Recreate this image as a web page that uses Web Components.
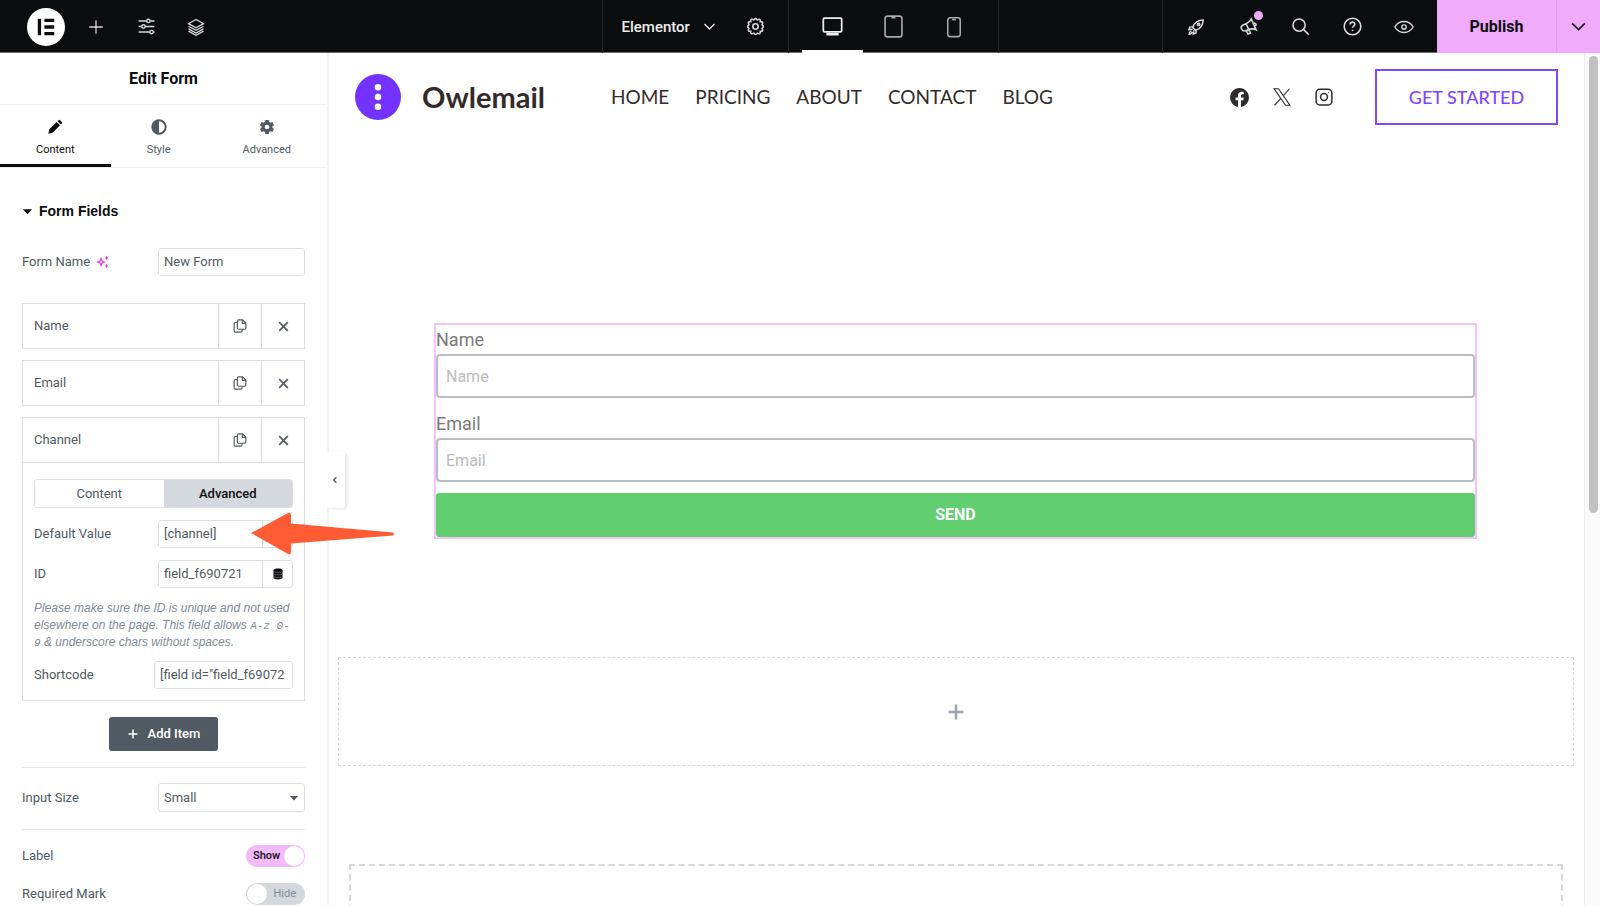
<!DOCTYPE html>
<html lang="en">
<head>
<meta charset="utf-8">
<title>Elementor | Edit Form</title>
<style>
  * { box-sizing: border-box; }
  body {
    margin: 0;
    height: 100vh;
    overflow: hidden;
    display: flex;
    flex-direction: column;
    background: #fff;
    color: #515962;
    font: 13px/18px Roboto, "Liberation Sans", sans-serif;
  }
  main {
    flex: 1;
    min-height: 0;
    display: flex;
  }
</style>
</head>
<body>
<editor-topbar></editor-topbar>
<main>
  <editor-panel>
    <panel-section heading="Form Fields">
      <text-control label="Form Name" value="New Form" ai></text-control>
      <field-list>
        <field-item label="Name"></field-item>
        <field-item label="Email"></field-item>
        <field-item label="Channel">
          <field-settings></field-settings>
        </field-item>
      </field-list>
      <select-control label="Input Size" value="Small"></select-control>
      <switch-control label="Label" checked></switch-control>
      <switch-control label="Required Mark"></switch-control>
    </panel-section>
  </editor-panel>
  <site-preview>
    <site-header></site-header>
    <form-widget></form-widget>
    <drop-zone class="add"></drop-zone>
    <drop-zone class="section"></drop-zone>
  </site-preview>
</main>

<script>
const icons = {
  logo: '<circle cx="12" cy="12" r="12" fill="#fff"/><path d="M6.8 6.8h2.1v10.4H6.8zM11 6.8h6.2v2.1H11zM11 10.95h6.2v2.1H11zM11 15.1h6.2v2.1H11z" fill="#0c0d0e"/>',
  plus: '<path d="M12 3v18M3 12h18"/>',
  sliders: '<path d="M2 5h10M16.5 5H22M2 12h4M10.5 12H22M2 19h14M20.5 19H22"/><circle cx="14.3" cy="5" r="2.2"/><circle cx="8.2" cy="12" r="2.2"/><circle cx="18.3" cy="19" r="2.2"/>',
  layers: '<path d="M12 2L2 7.5 12 13l10-5.5zM2 11l10 5.5L22 11M2 14.5L12 20l10-5.5M2 17.5L12 23l10-5.5"/>',
  chevron: '<path d="M4 8l8 8 8-8"/>',
  left: '<path d="M16 4l-8 8 8 8"/>',
  gear: '<path d="M9.8 3.6Q12 .4 14.2 3.6 18.6 1.4 18 5.9 22.5 5.5 20.3 9.7 23.5 12 20.3 14.3 22.5 18.5 18 18.1 18.6 22.6 14.2 20.4 12 23.6 9.8 20.4 5.4 22.6 6 18.1 1.5 18.5 3.7 14.3.5 12 3.7 9.7 1.5 5.5 6 5.9 5.4 1.4 9.8 3.6z"/><circle cx="12" cy="12" r="3.4"/>',
  desktop: '<rect x="1.5" y="2.5" width="21" height="15.5" rx="1.5"/><path d="M5 20.8h14" stroke-width="3"/>',
  tablet: '<rect x="3.2" y="1.2" width="17.6" height="21.6" rx="2.5"/><path d="M10 2.8h4"/>',
  phone: '<rect x="5.2" y="2" width="13.6" height="20.5" rx="2.5"/><path d="M10 4h4"/>',
  rocket: '<path d="M7.5 12.5C10 6 14 2.5 21.5 2.5c0 7.5-3.5 11.5-10 14zM8 11.5L4 12l-1.500 3.5 5-.5M12.5 16l-.5 4-3.500 1.500.5-5M6 17.5c-2 .5-3 2-3 4 2 0 3.500-1 4-3"/><circle cx="15.5" cy="8.5" r="1.6"/>',
  megaphone: '<path d="M15.5 2.5l6 13.500c-3.500-1.500-6-1.500-9.500 0L7.500 17.500c-4 1-6.500-5-3-7L9 8.500c3.500-1.500 5-2.800 6.500-6zM9 8.500l3.200 7.300M9 17l2.500 4.500 3-1.200-2.300-4.500M19 7.500c2.500.2 3.200 2 1.800 4"/>',
  search: '<circle cx="10.2" cy="10.2" r="7.7"/><path d="M16 16l6.500 6.500"/>',
  help: '<circle cx="12" cy="12" r="10.500"/><path d="M9 9.500c0-4 6-4 6-.3 0 2.300-3 2.300-3 4.500M12 16v1.800"/>',
  eye: '<path d="M1 12C6 3.300 18 3.300 23 12 18 20.700 6 20.700 1 12z"/><circle cx="12" cy="12" r="2.600"/>',
  pencil: '<path d="M2 22l1.500-6.500L14.500 4.500l5 5L8.500 20.500zM15.800 3.200l1.400-1.400q1.200-1 2.400 0l2.600 2.600q1 1.200 0 2.400l-1.400 1.400z" class="solid"/>',
  contrast: '<circle cx="12" cy="12" r="10" stroke-width="3"/><path d="M12 2v20a10 10 0 010-20z" class="solid"/>',
  cog: '<path d="M9.500 1.500h5l.6 3 2 1.100 2.900-1 2.500 4.300-2.300 2v2.200l2.300 2-2.500 4.300-2.900-1-2 1.100-.6 3h-5l-.6-3-2-1.100-2.900 1-2.500-4.300 2.300-2v-2.200l-2.300-2L4 4.600l2.900 1 2-1.100zM12 8.500a3.500 3.500 0 100 7 3.500 3.500 0 000-7z" class="solid"/>',
  caret: '<path d="M2 7h20L12 18z" class="solid"/>',
  sparkle: '<path d="M8 5l2 5 5 2-5 2-2 5-2-5-5-2 5-2z"/><path d="M19 0l1.500 2.500L23 4l-2.500 1.500L19 8l-1.500-2.500L15 4l2.500-1.500zM19 16l1.500 2.500L23 20l-2.500 1.500L19 24l-1.500-2.500L15 20l2.500-1.500z" class="solid"/>',
  copy: '<path d="M9.500 1.500h7L22 7v8.500q0 2-2 2H9.500q-2 0-2-2v-12q0-2 2-2zM16 2v5.500h5.500M7.500 6H4Q2 6 2 8v12.500q0 2 2 2h9.500q2 0 2-2v-3"/>',
  close: '<path d="M4 4l16 16M20 4L4 20"/>',
  database: '<path d="M3 4.500C3 0 21 0 21 4.500V19.500C21 24 3 24 3 19.500z" class="solid"/><path d="M3 7c3 2.500 15 2.500 18 0M3 12c3 2.500 15 2.500 18 0M3 17c3 2.500 15 2.500 18 0" stroke="#9da5ae" stroke-width="1"/>',
  dots: '<circle cx="12" cy="12" r="12" fill="#7332ff"/><g fill="#fff"><circle cx="12" cy="6.900" r="1.700"/><circle cx="12" cy="12" r="1.700"/><circle cx="12" cy="17.100" r="1.700"/></g>',
  facebook: '<path d="M24 12a12 12 0 10-13.900 11.900v-8.400H7.100V12h3V9.400c0-3 1.800-4.700 4.600-4.700 1.300 0 2.700.2 2.700.2v3h-1.500c-1.500 0-2 .9-2 1.900V12h3.400l-.5 3.500h-2.900v8.400A12 12 0 0024 12z" class="solid"/>',
  x: '<path d="M1.500 1h5.800l15.200 22h-5.800zM22 1L13.300 10.800M10.800 13.500L2 23"/>',
  instagram: '<rect x="1.500" y="1.500" width="21" height="21" rx="5"/><circle cx="12" cy="12" r="4.600"/><circle cx="18" cy="6" r=".8" class="solid"/>'
};

class Base extends HTMLElement {
  constructor() {
    super();
    this.attachShadow({mode: "open"});
  }
  connectedCallback() {
    this.shadowRoot.innerHTML = `
      <style>
        * { box-sizing: border-box; }
        :host { display: block; }
        button, input, select { font: inherit; color: inherit; margin: 0; }
        button { background: none; border: 0; padding: 0; cursor: pointer; }
        a { color: inherit; text-decoration: none; }
      </style>
      ${this.template()}
    `;
  }
  attr(name) {
    return this.getAttribute(name) || "";
  }
}

class UiIcon extends Base {
  template() {
    return `
      <style>
        :host { display: inline-flex; flex: none; }
        svg { display: block; fill: none; stroke: currentColor; overflow: visible; }
        .solid { fill: currentColor; stroke: none; }
      </style>
      <svg width="${this.attr("size")}" height="${this.attr("size")}" viewBox="0 0 24 24"
        stroke-width="${this.attr("weight") || 1.7}" aria-hidden="true">${icons[this.attr("name")]}</svg>
    `;
  }
}

class EditorTopbar extends Base {
  template() {
    return `
      <style>
        :host {
          display: grid;
          grid-template-columns: 1fr auto 1fr;
          height: 53px;
          flex: none;
          background: #0c0d0e;
          border-bottom: 1px solid #6d6d6d;
          color: #d8d8d8;
        }
        div { display: flex; }
        button { display: flex; align-items: center; justify-content: center; }
        .start { padding-left: 21px; }
        .start button { width: 50px; }
        .center, .tools { border-left: 1px solid #25272a; }
        .page { width: 185px; padding-left: 19px; gap: 12px; }
        .page button { gap: 12px; }
        .page .doc { font-size: 15px; font-weight: 500; color: #eee; }
        .page .set { width: 54px; }
        .devices { width: 211px; padding: 0 13px; border: 1px solid #25272a; border-width: 0 1px; }
        .devices button { width: 61px; border-bottom: 3px solid transparent; border-top: 3px solid transparent; color: #aaa; }
        .devices .on { height: 53px; border-bottom-color: #fff; color: #eee; }
        .end { justify-content: flex-end; }
        .tools { padding: 0 7px; }
        .tools button { width: 52px; position: relative; }
        .dot {
          position: absolute;
          top: 11px;
          right: 11px;
          width: 9px;
          height: 9px;
          border-radius: 50%;
          background: #f0abfc;
        }
        .publish { background: #f0abfc; color: #0c0d0e; }
        .publish button:first-child { width: 119px; font-size: 16px; font-weight: 700; }
        .publish button:last-child { width: 44px; border-left: 1px solid #e59bf2; }
      </style>
      <div class="start">
        <button aria-label="Elementor"><ui-icon name="logo" size="38" weight="0"></ui-icon></button>
        <button aria-label="Add Element"><ui-icon name="plus" size="18"></ui-icon></button>
        <button aria-label="Site Settings"><ui-icon name="sliders" size="19"></ui-icon></button>
        <button aria-label="Structure"><ui-icon name="layers" size="18"></ui-icon></button>
      </div>
      <div class="center">
        <div class="page">
          <button class="doc">Elementor <ui-icon name="chevron" size="15" weight="2"></ui-icon></button>
          <button class="set" aria-label="Page Settings"><ui-icon name="gear" size="19" weight="2"></ui-icon></button>
        </div>
        <div class="devices">
          <button class="on" aria-label="Desktop"><ui-icon name="desktop" size="21" weight="2"></ui-icon></button>
          <button aria-label="Tablet"><ui-icon name="tablet" size="23"></ui-icon></button>
          <button aria-label="Mobile"><ui-icon name="phone" size="22"></ui-icon></button>
        </div>
      </div>
      <div class="end">
        <div class="tools">
          <button aria-label="Checklist"><ui-icon name="rocket" size="18" weight="2"></ui-icon></button>
          <button aria-label="What's New"><ui-icon name="megaphone" size="19" weight="2"></ui-icon><span class="dot"></span></button>
          <button aria-label="Finder"><ui-icon name="search" size="19" weight="2"></ui-icon></button>
          <button aria-label="Help"><ui-icon name="help" size="19" weight="2"></ui-icon></button>
          <button aria-label="Preview"><ui-icon name="eye" size="20"></ui-icon></button>
        </div>
        <div class="publish">
          <button>Publish</button>
          <button aria-label="Save Options"><ui-icon name="chevron" size="19" weight="2"></ui-icon></button>
        </div>
      </div>
    `;
  }
}

class EditorPanel extends Base {
  template() {
    return `
      <style>
        :host {
          width: 329px;
          flex: none;
          position: relative;
          z-index: 1;
          margin-right: -1px;
          border-right: 2px solid #f3f4f5;
        }
        h1 {
          margin: 0;
          color: #0c0d0e;
          font-size: 16px;
          line-height: 51px;
          font-weight: 700;
          text-align: center;
          border-bottom: 1px solid #eceef0;
        }
        nav { display: flex; border-bottom: 1px solid #eceef0; }
        nav button {
          flex: 1 1 auto;
          display: flex;
          flex-direction: column;
          align-items: center;
          gap: 7px;
          padding: 14px 0 6px;
          font-size: 11px;
          line-height: 16px;
          border-bottom: 3px solid transparent;
        }
        nav .on { color: #0c0d0e; border-bottom-color: #0c0d0e; }
        .collapse {
          position: absolute;
          left: 327px;
          top: 399px;
          width: 18px;
          height: 56px;
          display: flex;
          align-items: center;
          justify-content: center;
          padding-right: 2px;
          background: #fff;
          border-radius: 0 3px 3px 0;
          box-shadow: 2px 1px 3px rgba(0,0,0,0.1);
        }
        .pointer { position: absolute; left: 250px; top: 459px; }
      </style>
      <h1>Edit Form</h1>
      <nav>
        <button class="on"><ui-icon name="pencil" size="16"></ui-icon>Content</button>
        <button><ui-icon name="contrast" size="16"></ui-icon>Style</button>
        <button><ui-icon name="cog" size="16"></ui-icon>Advanced</button>
      </nav>
      <slot></slot>
      <button class="collapse" aria-label="Hide Panel"><ui-icon name="left" size="8" weight="4"></ui-icon></button>
      <svg class="pointer" width="145" height="44" viewBox="0 0 145 44" aria-hidden="true">
        <path d="M1 21L38 1q3-1 3 2v8.500L143 20.500q2 2 0 3L41 31.500V40q0 3-3 2z" fill="#ff5c35"/>
      </svg>
    `;
  }
}

class PanelSection extends Base {
  template() {
    return `
      <style>
        :host { padding: 32px 22px 0 22px; }
        h2 {
          display: flex;
          align-items: center;
          gap: 6px;
          margin: 0 0 26px;
          color: #0c0d0e;
          font: 700 14px/22px "Liberation Sans", sans-serif;
        }
      </style>
      <h2><ui-icon name="caret" size="11"></ui-icon>${this.attr("heading")}</h2>
      <slot></slot>
    `;
  }
}

class TextControl extends Base {
  template() {
    return `
      <style>
        :host { display: flex; align-items: center; justify-content: space-between; }
        label { display: flex; align-items: center; gap: 7px; }
        ui-icon { color: #e13be8; }
        .box {
          display: flex;
          width: var(--box, 147px);
          height: 28px;
          border: 1px solid #dcdfe2;
          border-radius: 3px;
          overflow: hidden;
        }
        input { flex: 1; min-width: 0; padding: 0 5px; border: 0; outline: 0; background: #fff; }
        button {
          width: 30px;
          display: flex;
          align-items: center;
          justify-content: center;
          border-left: 1px solid #dcdfe2;
        }
        button ui-icon { color: #0c0d0e; }
      </style>
      <label for="field">${this.attr("label")}
        ${this.hasAttribute("ai") ? '<ui-icon name="sparkle" size="12" weight="2.400"></ui-icon>' : ""}
      </label>
      <div class="box">
        <input id="field" type="text">
        ${this.hasAttribute("dynamic") ? '<button aria-label="Dynamic Tags"><ui-icon name="database" size="12"></ui-icon></button>' : ""}
      </div>
    `;
  }
  connectedCallback() {
    super.connectedCallback();
    this.shadowRoot.querySelector("input").value = this.attr("value");
  }
}

class FieldList extends Base {
  template() {
    return `
      <style>
        :host { display: flex; flex-direction: column; gap: 11px; padding: 27px 0 16px; border-bottom: 1px solid #e6e8ea; }
        .add {
          align-self: center;
          display: flex;
          align-items: center;
          gap: 9px;
          height: 34px;
          margin-top: 5px;
          padding: 0 18px;
          border-radius: 3px;
          background: #515962;
          color: #fff;
          font-weight: 500;
        }
      </style>
      <slot></slot>
      <button class="add"><ui-icon name="plus" size="12" weight="3"></ui-icon>Add Item</button>
    `;
  }
}

class FieldItem extends Base {
  template() {
    return `
      <style>
        :host { border: 1px solid #dcdfe2; }
        .row { display: flex; height: 44px; }
        button { display: flex; align-items: center; justify-content: center; width: 43px; border-left: 1px solid #dcdfe2; }
        .title { flex: 1; justify-content: flex-start; padding-left: 11px; border: 0; }
      </style>
      <div class="row">
        <button class="title">${this.attr("label")}</button>
        <button aria-label="Duplicate"><ui-icon name="copy" size="14" weight="2"></ui-icon></button>
        <button aria-label="Remove"><ui-icon name="close" size="13" weight="3"></ui-icon></button>
      </div>
      <slot></slot>
    `;
  }
}

class FieldSettings extends Base {
  template() {
    return `
      <style>
        :host { border-top: 1px solid #dcdfe2; padding: 16px 11px 11px; }
        .tabs { display: flex; margin-bottom: 12px; border: 1px solid #dcdfe2; border-radius: 3px; }
        .tabs button { flex: 1; height: 27px; }
        .tabs .on { background: #d5d8dc; color: #0c0d0e; font-weight: 500; }
        text-control { --box: 135px; margin-bottom: 12px; }
        text-control:last-child { --box: 139px; margin: 0; }
        p { margin: 0 0 10px; color: #818a96; font: italic 12px/17px "Liberation Sans", sans-serif; }
        code { font: italic 11px/12px "Liberation Mono", monospace; }
      </style>
      <div class="tabs">
        <button>Content</button>
        <button class="on">Advanced</button>
      </div>
      <text-control label="Default Value" value="[channel]" dynamic></text-control>
      <text-control label="ID" value="field_f690721" dynamic></text-control>
      <p>Please make sure the ID is unique and not used elsewhere on the page. This field allows <code>A-z 0-</code><wbr><code>9</code> &amp; underscore chars without spaces.</p>
      <text-control label="Shortcode" value='[field id="field_f69072'></text-control>
    `;
  }
}

class SelectControl extends Base {
  template() {
    return `
      <style>
        :host {
          display: flex;
          align-items: center;
          justify-content: space-between;
          padding: 15px 0 17px;
          margin-bottom: 15px;
          border-bottom: 1px solid #e6e8ea;
        }
        .box { display: grid; align-items: center; width: 147px; }
        .box > * { grid-area: 1 / 1; }
        select {
          appearance: none;
          height: 29px;
          padding: 0 5px;
          border: 1px solid #dcdfe2;
          border-radius: 3px;
          background: #fff;
        }
        ui-icon { justify-self: end; margin-right: 6px; pointer-events: none; }
      </style>
      <label for="field">${this.attr("label")}</label>
      <div class="box">
        <select id="field"><option>${this.attr("value")}</option></select>
        <ui-icon name="caret" size="10"></ui-icon>
      </div>
    `;
  }
}

class SwitchControl extends Base {
  template() {
    const on = this.hasAttribute("checked");
    return `
      <style>
        :host { display: flex; align-items: center; justify-content: space-between; margin-bottom: 16px; }
        .switch {
          display: grid;
          align-items: center;
          width: 59px;
          height: 22px;
          border-radius: 11px;
          background: #d5d8dc;
          color: #818a96;
          font-size: 11px;
        }
        .switch > * { grid-area: 1 / 1; }
        input {
          appearance: none;
          width: 20px;
          height: 20px;
          margin: 0 1px;
          border-radius: 50%;
          background: #fff;
        }
        .switch span { justify-self: end; padding: 0 9px 0 7px; }
        .on { background: #f3bafd; color: #0c0d0e; font-weight: 500; }
        .on input { justify-self: end; }
        .on span { justify-self: start; }
      </style>
      <label for="field">${this.attr("label")}</label>
      <div class="switch ${on ? "on" : ""}">
        <span>${on ? "Show" : "Hide"}</span>
        <input id="field" type="checkbox" ${on ? "checked" : ""}>
      </div>
    `;
  }
}

class SitePreview extends Base {
  template() {
    return `
      <style>
        :host { flex: 1; min-width: 0; display: flex; overflow: hidden; }
        .canvas { flex: 1; min-width: 0; }
        .track { width: 16px; padding: 3px 0 0 4px; background: #fafafa; border-left: 1px solid #ededed; }
        .thumb { width: 9px; height: 457px; border-radius: 5px; background: #c1c1c1; }
        ::slotted(.add) { --line: 1px dashed #d5d8dc; height: 109px; margin: 118px 10px 98px; }
        ::slotted(.section) { --line: 2px dashed #d5d8dc; height: 160px; margin: 0 21px; }
      </style>
      <div class="canvas"><slot></slot></div>
      <div class="track"><div class="thumb"></div></div>
    `;
  }
}

class SiteHeader extends Base {
  template() {
    return `
      <style>
        :host {
          display: flex;
          align-items: center;
          padding: 16px 26px 0 27px;
          color: #332b2b;
          font-family: Lato, "Liberation Sans", sans-serif;
        }
        .brand { display: flex; align-items: center; gap: 21px; font-size: 29px; line-height: 40px; font-weight: 700; }
        nav { display: flex; gap: 26px; margin-left: 66px; font-size: 19px; line-height: 24px; }
        .social { display: flex; align-items: center; gap: 24px; margin-left: auto; }
        .social a { display: flex; }
        .cta {
          margin-left: 42px;
          width: 183px;
          height: 56px;
          border: 2px solid #7f45ff;
          color: #7f45ff;
          font-size: 18px;
          font-weight: 500;
        }
      </style>
      <a class="brand" href="#"><ui-icon name="dots" size="46" weight="0"></ui-icon>Owlemail</a>
      <nav>
        <a href="#">HOME</a>
        <a href="#">PRICING</a>
        <a href="#">ABOUT</a>
        <a href="#">CONTACT</a>
        <a href="#">BLOG</a>
      </nav>
      <div class="social">
        <a href="#" aria-label="Facebook"><ui-icon name="facebook" size="19"></ui-icon></a>
        <a href="#" aria-label="X"><ui-icon name="x" size="18" weight="1.500"></ui-icon></a>
        <a href="#" aria-label="Instagram"><ui-icon name="instagram" size="18" weight="2"></ui-icon></a>
      </div>
      <button class="cta">GET STARTED</button>
    `;
  }
}

class FormWidget extends Base {
  template() {
    return `
      <style>
        :host { margin: 198px 107px 0 106px; border: 2px solid #f5c2fd; color: #7a7a7a; }
        form { display: flex; flex-direction: column; }
        label { font-size: 18px; line-height: 29px; }
        input {
          height: 44px;
          margin-bottom: 11px;
          padding: 0 8px;
          border: 2px solid #b9bec5;
          border-radius: 4px;
          outline: 0;
          font-size: 16px;
        }
        input::placeholder { color: #bcbcbc; }
        button { height: 44px; border-radius: 3px; background: #61ce70; color: #fff; font-size: 16px; font-weight: 700; }
      </style>
      <form>
        <label for="name">Name</label>
        <input id="name" type="text" placeholder="Name">
        <label for="email">Email</label>
        <input id="email" type="email" placeholder="Email">
        <button type="button">SEND</button>
      </form>
    `;
  }
}

class DropZone extends Base {
  template() {
    return `
      <style>
        :host { display: flex; border: var(--line); }
        button { flex: 1; display: flex; align-items: center; justify-content: center; color: #9da5ae; }
      </style>
      ${this.classList.contains("add") ? '<button aria-label="Add New Container"><ui-icon name="plus" size="20" weight="3"></ui-icon></button>' : ""}
    `;
  }
}

customElements.define("ui-icon", UiIcon);
customElements.define("editor-topbar", EditorTopbar);
customElements.define("editor-panel", EditorPanel);
customElements.define("panel-section", PanelSection);
customElements.define("text-control", TextControl);
customElements.define("field-list", FieldList);
customElements.define("field-item", FieldItem);
customElements.define("field-settings", FieldSettings);
customElements.define("select-control", SelectControl);
customElements.define("switch-control", SwitchControl);
customElements.define("site-preview", SitePreview);
customElements.define("site-header", SiteHeader);
customElements.define("form-widget", FormWidget);
customElements.define("drop-zone", DropZone);
</script>
</body>
</html>
